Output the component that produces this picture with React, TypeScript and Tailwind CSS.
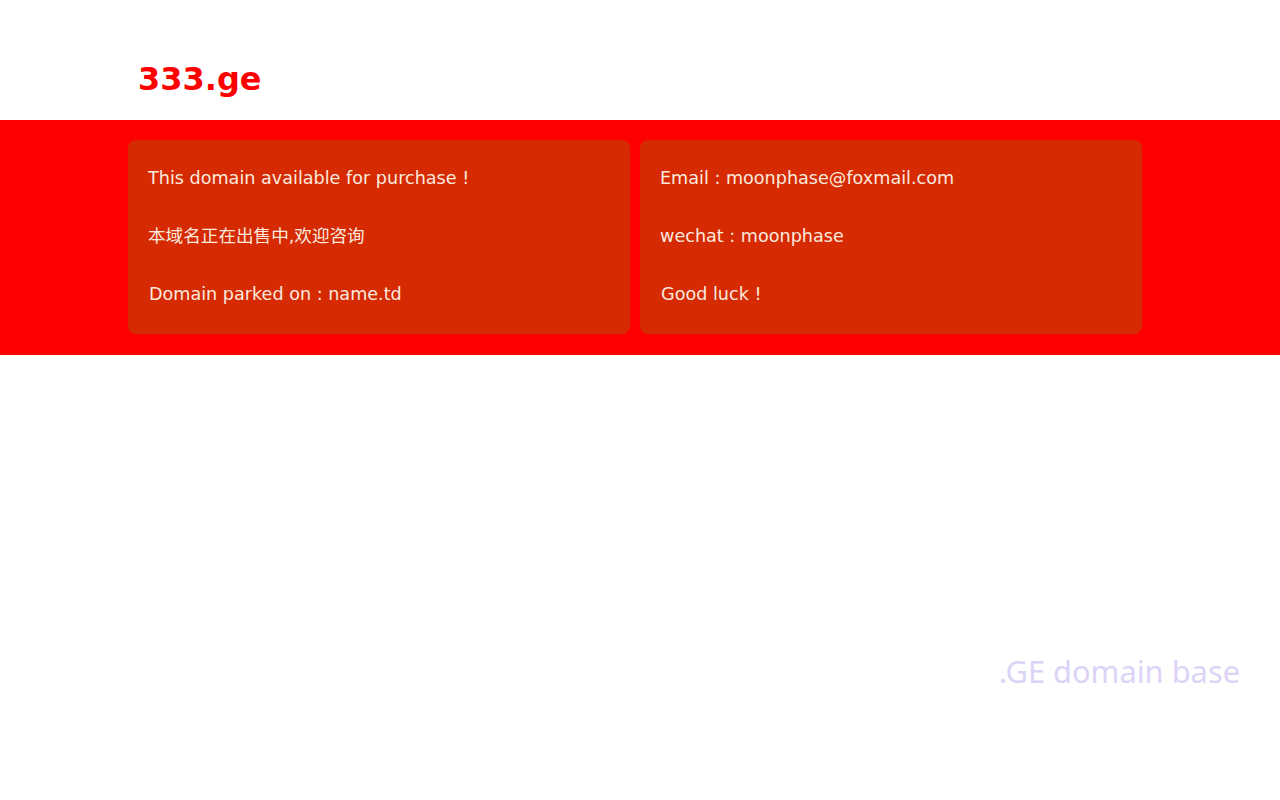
export default function App() {
  const left = [
    "This domain available for purchase !",
    "本域名正在出售中,欢迎咨询",
    "Domain parked on : name.td",
  ];
  const right = ["Email : moonphase@foxmail.com", "wechat : moonphase", "Good luck !"];

  return (
    <div className="min-h-screen w-full bg-white font-['DejaVu_Sans','Noto_Sans_CJK_SC',sans-serif]">
      {/* Header */}
      <header className="h-[120px]">
        <div className="mx-auto w-[1024px] px-[10px] pt-[59px]">
          <h1 className="text-[32px] font-bold leading-[40px] text-[#ff0000]">333.ge</h1>
        </div>
      </header>

      {/* Red band with info cards */}
      <section className="bg-[#ff0000] pt-[20px] pb-[21px]">
        <div className="mx-auto flex w-[1024px]">
          {[left, right].map((lines, i) => (
            <div key={i} className="mr-[10px] flex-1">
              <div className="rounded-[8px] bg-[#d52a02] px-[20px] pt-[9px] pb-[11px] text-[17.6px] text-[#fbe9de]">
                {lines.map((t, j) => (
                  <p key={t} className={j === 2 ? "pl-px leading-[58px]" : "leading-[58px]"}>
                    {t}
                  </p>
                ))}
              </div>
            </div>
          ))}
        </div>
      </section>

      {/* Footer note */}
      <div className="mt-[296px] pr-[40px] text-right font-['Noto_Sans',sans-serif] text-[30.8px] leading-[40px] text-[#ddd3f6]">
        .GE domain base
      </div>
    </div>
  );
}
